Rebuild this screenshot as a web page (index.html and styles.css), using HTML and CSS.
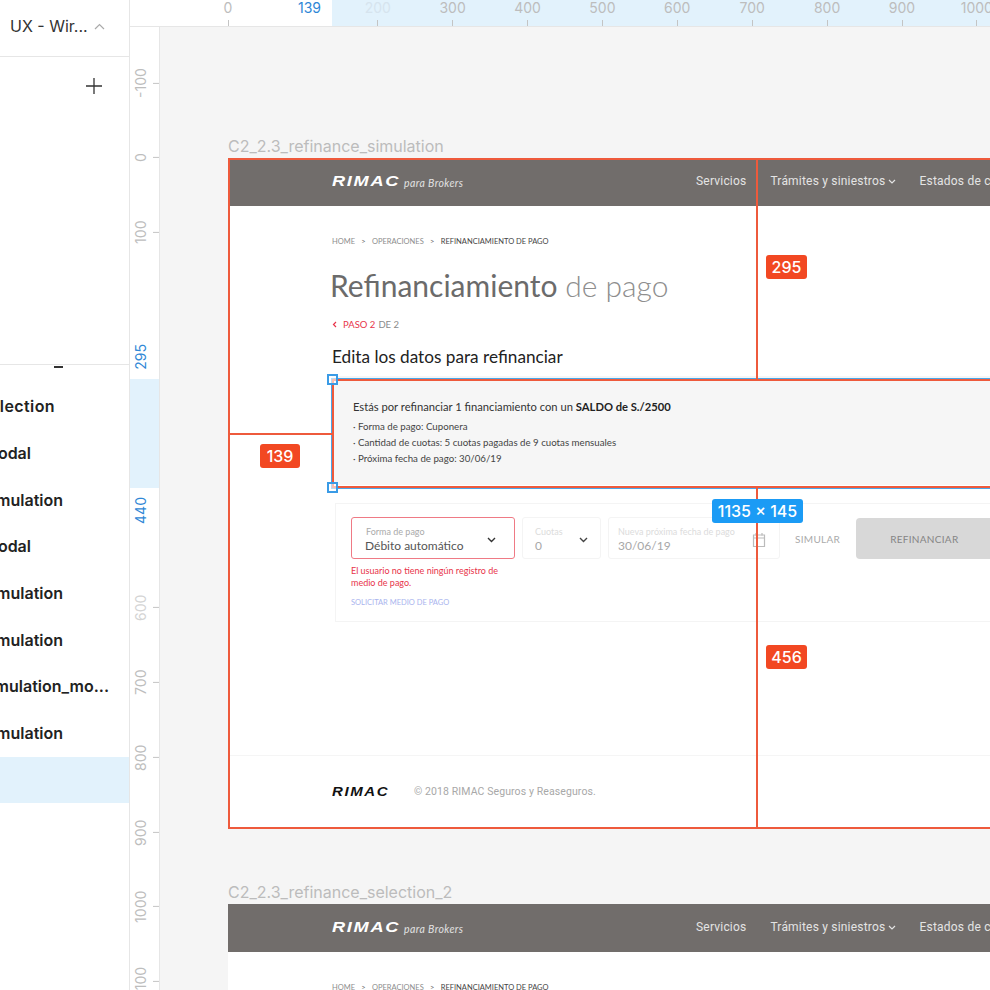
FILE: index.html
```html
<!DOCTYPE html>
<html lang="en">
<head>
    <meta charset="UTF-8">
    <title>UX - Wireframes</title>
    <link rel="stylesheet" href="styles.css">
</head>
<body>
    <div class="app">
        <aside class="sidebar">
            <div class="file-bar">
                <span class="file-name">UX - Wir...</span>
                <svg class="file-caret" width="11" height="7" viewBox="0 0 11 7"><path d="M1 6l4.5-4.5L10 6" fill="none" stroke="#aaa" stroke-width="1.2"/></svg>
            </div>
            <div class="pages-bar">
                <svg width="18" height="18" viewBox="0 0 18 18"><path d="M9 1v16M1 9h16" fill="none" stroke="#333" stroke-width="1.3"/></svg>
            </div>
            <div class="layers">
                <div class="layer-tail"></div>
                <div class="layer end-54">lection</div>
                <div class="layer end-30">odal</div>
                <div class="layer end-62">mulation</div>
                <div class="layer end-30">odal</div>
                <div class="layer end-62">mulation</div>
                <div class="layer end-62">mulation</div>
                <div class="layer end-108">mulation_mo...</div>
                <div class="layer end-62">mulation</div>
                <div class="layer layer-selected"></div>
            </div>
        </aside>

        <main class="workspace">
            <div class="ruler-top">
                <div class="ruler-top-band"></div>
                <span class="ruler-top-value">139</span>
                <div class="ruler-top-cells">
                    <span class="mark">0</span>
                    <span class="mark no-tick"></span>
                    <span class="mark faded">200</span>
                    <span class="mark">300</span>
                    <span class="mark">400</span>
                    <span class="mark">500</span>
                    <span class="mark">600</span>
                    <span class="mark">700</span>
                    <span class="mark">800</span>
                    <span class="mark">900</span>
                    <span class="mark">1000</span>
                </div>
            </div>
            <div class="workspace-body">
                <div class="ruler-left">
                    <div class="ruler-left-band"></div>
                    <span class="ruler-left-value value-295">295</span>
                    <span class="ruler-left-value value-440">440</span>
                    <div class="ruler-left-cells">
                        <span class="vmark">-100</span>
                        <span class="vmark">0</span>
                        <span class="vmark">100</span>
                        <span class="vmark no-tick"></span>
                        <span class="vmark no-tick"></span>
                        <span class="vmark no-tick"></span>
                        <span class="vmark no-tick"></span>
                        <span class="vmark faded">600</span>
                        <span class="vmark">700</span>
                        <span class="vmark">800</span>
                        <span class="vmark">900</span>
                        <span class="vmark">1000</span>
                        <span class="vmark">1100</span>
                    </div>
                </div>

                <div class="canvas">
                    <div class="frame-label label-one">C2_2.3_refinance_simulation</div>
                    <section class="frame frame-one">
                        <header class="site-header">
                            <div class="brand">
                                <span class="logo">RIMAC</span>
                                <span class="brand-sub">para Brokers</span>
                            </div>
                            <nav class="site-nav">
                                <span>Servicios</span>
                                <span class="nav-drop">Trámites y siniestros
                                    <svg width="8" height="5" viewBox="0 0 8 5"><path d="M1 1l3 3 3-3" fill="none" stroke="#e4e4e4" stroke-width="1.2"/></svg>
                                </span>
                                <span>Estados de cuenta</span>
                            </nav>
                        </header>

                        <div class="page">
                            <div class="crumbs">
                                <span>HOME</span><i>&gt;</i><span>OPERACIONES</span><i>&gt;</i><span class="crumb-now">REFINANCIAMIENTO DE PAGO</span>
                            </div>
                            <h1 class="page-title">Refinanciamiento <span>de pago</span></h1>
                            <div class="step">
                                <svg width="5" height="7" viewBox="0 0 5 7"><path d="M4 1L1.5 3.5 4 6" fill="none" stroke="#e8344a" stroke-width="1.2"/></svg>
                                <span class="step-now">PASO 2</span> <span>DE 2</span>
                            </div>
                            <h2 class="section-title">Edita los datos para refinanciar</h2>

                            <div class="notice">
                                <p class="notice-lead">Estás por refinanciar 1 financiamiento con un <b>SALDO de S./2500</b></p>
                                <p>· Forma de pago: Cuponera</p>
                                <p>· Cantidad de cuotas: 5 cuotas pagadas de 9 cuotas mensuales</p>
                                <p>· Próxima fecha de pago: 30/06/19</p>
                            </div>

                            <div class="form-card">
                                <div class="field-col">
                                    <div class="field field-error">
                                        <div>
                                            <div class="field-label">Forma de pago</div>
                                            <div class="field-value">Débito automático</div>
                                        </div>
                                        <svg width="9" height="6" viewBox="0 0 9 6"><path d="M1 1l3.5 3.5L8 1" fill="none" stroke="#333" stroke-width="1.4"/></svg>
                                    </div>
                                    <p class="field-msg">El usuario no tiene ningún registro de medio de pago.</p>
                                    <div class="field-link">SOLICITAR MEDIO DE PAGO</div>
                                </div>
                                <div class="field field-off field-cuotas">
                                    <div>
                                        <div class="field-label">Cuotas</div>
                                        <div class="field-value">0</div>
                                    </div>
                                    <svg width="9" height="6" viewBox="0 0 9 6"><path d="M1 1l3.5 3.5L8 1" fill="none" stroke="#444" stroke-width="1.4"/></svg>
                                </div>
                                <div class="field field-off field-date">
                                    <div>
                                        <div class="field-label">Nueva próxima fecha de pago</div>
                                        <div class="field-value">30/06/19</div>
                                    </div>
                                    <svg width="14" height="16" viewBox="0 0 14 16"><path d="M1.5 3h11v11.5h-11zM1.5 6h11" fill="none" stroke="#bbb" stroke-width="1.2"/><path d="M4 1v2.5M10 1v2.5" stroke="#bbb" stroke-width="1.2"/></svg>
                                </div>
                                <span class="btn-text">SIMULAR</span>
                                <span class="btn-solid">REFINANCIAR</span>
                            </div>
                        </div>

                        <footer class="site-footer">
                            <span class="logo logo-dark">RIMAC</span>
                            <span class="copyright">© 2018 RIMAC Seguros y Reaseguros.</span>
                        </footer>

                        <!-- measure overlay -->
                        <div class="frame-outline"></div>
                        <div class="select-box">
                            <span class="handle handle-top"></span>
                            <span class="handle handle-bottom"></span>
                        </div>
                        <div class="guide guide-left"></div>
                        <div class="guide guide-up"></div>
                        <div class="guide guide-down"></div>
                        <span class="tag tag-139">139</span>
                        <span class="tag tag-295">295</span>
                        <span class="tag tag-456">456</span>
                        <span class="tag tag-size">1135 × 145</span>
                    </section>

                    <div class="frame-label label-two">C2_2.3_refinance_selection_2</div>
                    <section class="frame frame-two">
                        <header class="site-header">
                            <div class="brand">
                                <span class="logo">RIMAC</span>
                                <span class="brand-sub">para Brokers</span>
                            </div>
                            <nav class="site-nav">
                                <span>Servicios</span>
                                <span class="nav-drop">Trámites y siniestros
                                    <svg width="8" height="5" viewBox="0 0 8 5"><path d="M1 1l3 3 3-3" fill="none" stroke="#e4e4e4" stroke-width="1.2"/></svg>
                                </span>
                                <span>Estados de cuenta</span>
                            </nav>
                        </header>
                        <div class="page">
                            <div class="crumbs">
                                <span>HOME</span><i>&gt;</i><span>OPERACIONES</span><i>&gt;</i><span class="crumb-now">REFINANCIAMIENTO DE PAGO</span>
                            </div>
                        </div>
                    </section>
                </div>
            </div>
        </main>
    </div>
</body>
</html>
```

FILE: styles.css
```css
* {
    box-sizing: border-box;
}
html, body {
    margin: 0;
    height: 100%;
    overflow: hidden;
}
body {
    font-family: Inter, "Noto Sans", sans-serif;
    color: #333;
    background-color: #fff;
}
p {
    margin: 0;
}
.app {
    display: flex;
    width: 990px;
    height: 990px;
    overflow: hidden;
}

/* left panel */
.sidebar {
    width: 130px;
    flex-shrink: 0;
    background-color: #fff;
    border-right: 1px solid #e6e6e6;
    overflow: hidden;
}
.file-bar {
    height: 57px;
    padding: 0 0 4px 10px;
    display: flex;
    align-items: center;
    border-bottom: 1px solid #e6e6e6;
}
.file-name {
    font-size: 16px;
    color: #333;
    white-space: nowrap;
}
.file-caret {
    margin-left: 6px;
}
.pages-bar {
    height: 308px;
    padding: 20px 0 0 85px;
    border-bottom: 1px solid #e6e6e6;
}
.layers {
    position: relative;
    padding-top: 18px;
}
.layer-tail {
    position: absolute;
    left: 54px;
    top: 1px;
    width: 9px;
    height: 2px;
    background-color: #333;
}
.layer {
    height: 46.7px;
    display: flex;
    align-items: center;
    justify-content: flex-end;
    font-size: 16px;
    font-weight: 600;
    color: #222;
    white-space: nowrap;
}
.end-30 { width: 31px; }
.end-54 { width: 55px; letter-spacing: 0.4px; }
.end-62 { width: 63px; }
.end-108 { width: 109px; }
.layer-selected {
    width: auto;
    background-color: #e2f2fc;
}

/* rulers */
.workspace {
    flex: 1;
    min-width: 0;
    display: flex;
    flex-direction: column;
}
.ruler-top {
    position: relative;
    height: 27px;
    background-color: #fff;
    border-bottom: 1px solid #e6e6e6;
    overflow: hidden;
    flex-shrink: 0;
}
.ruler-top-band {
    position: absolute;
    left: 202px;
    right: 0;
    top: 0;
    bottom: 0;
    background-color: #e2f2fc;
}
.ruler-top-value {
    position: absolute;
    left: 168px;
    top: 0;
    font-size: 14px;
    line-height: 16px;
    color: #2f87d6;
}
.ruler-top-cells {
    position: relative;
    display: flex;
    padding-left: 60.5px;
}
.mark {
    position: relative;
    width: 74.9px;
    height: 27px;
    flex-shrink: 0;
    text-align: center;
    font-size: 14px;
    line-height: 16px;
    color: #bdbdbd;
}
.mark::after {
    content: "";
    position: absolute;
    left: 37px;
    top: 20px;
    width: 1px;
    height: 6px;
    background-color: #c4c4c4;
}
.mark.no-tick::after,
.vmark.no-tick::after {
    display: none;
}
.mark.faded {
    color: #d6e4ee;
}
.workspace-body {
    flex: 1;
    min-height: 0;
    display: flex;
}
.ruler-left {
    position: relative;
    width: 30px;
    flex-shrink: 0;
    background-color: #fff;
    border-right: 1px solid #e6e6e6;
    overflow: hidden;
}
.ruler-left-band {
    position: absolute;
    left: 0;
    right: 0;
    top: 352px;
    height: 109px;
    background-color: #e2f2fc;
}
.ruler-left-value {
    position: absolute;
    left: 3px;
    writing-mode: vertical-rl;
    transform: rotate(180deg);
    font-size: 14px;
    line-height: 16px;
    color: #2f87d6;
}
.value-295 { top: 317px; }
.value-440 { top: 470px; }
.ruler-left-cells {
    position: relative;
    padding-top: 18.6px;
}
.vmark {
    position: relative;
    display: flex;
    align-items: center;
    justify-content: center;
    width: 29px;
    height: 74.9px;
    padding-left: 8px;
    font-size: 14px;
    color: #bdbdbd;
    writing-mode: vertical-rl;
    transform: rotate(180deg);
}
.vmark::after {
    content: "";
    position: absolute;
    left: 0;
    top: 37px;
    width: 6px;
    height: 1px;
    background-color: #c4c4c4;
}
.vmark.faded {
    color: #d4d4d4;
}

/* canvas and frames */
.canvas {
    position: relative;
    flex: 1;
    min-width: 0;
    overflow: hidden;
    background-color: #f5f5f5;
}
.frame-label {
    position: absolute;
    left: 68px;
    font-size: 16px;
    line-height: 20px;
    color: #bcbcbc;
    white-space: nowrap;
}
.label-one { top: 109px; }
.label-two { top: 855px; }
.frame {
    position: absolute;
    left: 68px;
    width: 1440px;
    display: flex;
    flex-direction: column;
    background-color: #fff;
    font-family: Lato, "Noto Sans", sans-serif;
}
.frame-one {
    top: 131px;
    height: 671px;
}
.frame-two {
    top: 877px;
    height: 400px;
}
.site-header {
    height: 48px;
    flex-shrink: 0;
    display: flex;
    align-items: center;
    padding: 0 0 2px 104px;
    background-color: #716d6b;
}
.brand {
    width: 364px;
    display: flex;
    align-items: center;
    gap: 6px;
}
.logo {
    font-family: "Liberation Sans", Arial, sans-serif;
    font-size: 14px;
    font-weight: 700;
    font-style: italic;
    letter-spacing: 1.3px;
    color: #fff;
    transform: scaleX(1.3);
    transform-origin: left center;
    display: inline-block;
    width: 66px;
}
.brand-sub {
    margin-top: 4px;
    font-size: 10.5px;
    font-style: italic;
    letter-spacing: 0.4px;
    color: #e2e2e2;
}
.site-nav {
    display: flex;
    gap: 24px;
    font-family: Roboto, sans-serif;
    font-size: 12px;
    letter-spacing: 0.2px;
    color: #e4e4e4;
    white-space: nowrap;
}
.nav-drop svg {
    margin-left: -1px;
    vertical-align: 1px;
}
.page {
    flex: 1;
    padding: 29px 0 0 104px;
}
.crumbs {
    height: 12px;
    display: flex;
    align-items: center;
    font-size: 7.5px;
    color: #8d8d8d;
    white-space: nowrap;
}
.crumbs i {
    width: 17px;
    text-align: center;
    font-style: normal;
    color: #666;
}
.crumb-now {
    color: #444;
}
.page-title {
    margin: 18px 0 0 -2px;
    font-size: 30px;
    line-height: 40px;
    font-weight: 400;
    color: #6b6b6b;
    white-space: nowrap;
}
.page-title span {
    font-weight: 300;
    color: #8e8e8e;
}
.step {
    margin-top: 12px;
    height: 14px;
    display: flex;
    align-items: center;
    gap: 3px;
    font-size: 9.5px;
    color: #8a8a8a;
}
.step svg {
    margin-right: 3px;
}
.step-now {
    color: #e8344a;
}
.section-title {
    margin: 15px 0 0;
    height: 22px;
    font-size: 17.2px;
    line-height: 22px;
    font-weight: 400;
    color: #222;
}
.notice {
    margin-top: 8px;
    height: 109px;
    padding: 23px 0 0 21px;
    background-color: #f6f6f6;
    font-size: 9.7px;
    line-height: 16px;
    color: #444;
}
.notice-lead {
    font-size: 11.2px;
    margin-bottom: 3px;
    color: #333;
}
.notice-lead b {
    color: #222;
}
.form-card {
    margin: 18px 0 0 3px;
    height: 119px;
    padding: 13px 0 0 15px;
    display: flex;
    align-items: flex-start;
    border: 1px solid #f4f4f4;
}
.field-col {
    width: 164px;
}
.field {
    height: 42px;
    padding-top: 4px;
    display: flex;
    align-items: center;
    justify-content: space-between;
    border: 1px solid #f4f4f4;
    border-radius: 3px;
}
.field-error {
    border-color: #ef7a85;
    padding: 4px 18px 0 13px;
}
.field-label {
    font-size: 9px;
    line-height: 12px;
    color: #aaa;
}
.field-error .field-label {
    padding-left: 1px;
}
.field-value {
    font-size: 12px;
    line-height: 16px;
    color: #555;
}
.field-off .field-label {
    color: #dcdcdc;
}
.field-off .field-value {
    color: #a8a8a8;
}
.field-cuotas {
    width: 79px;
    margin-left: 7px;
    padding: 4px 12px 0;
}
.field-date {
    width: 172px;
    margin-left: 7px;
    padding: 4px 13px 0 9px;
}
.field-msg {
    margin-top: 6px;
    font-size: 9px;
    line-height: 12px;
    color: #e8344a;
}
.field-link {
    margin-top: 8px;
    font-size: 7.5px;
    line-height: 11px;
    color: #a9b4ee;
}
.btn-text {
    margin: 14px 0 0 15px;
    font-size: 10px;
    line-height: 16px;
    letter-spacing: 0.3px;
    color: #aaa;
}
.btn-solid {
    margin: 1px 0 0 16px;
    width: 200px;
    height: 41px;
    padding-left: 34px;
    display: flex;
    align-items: center;
    border-radius: 4px;
    background-color: #d8d8d8;
    font-size: 10px;
    letter-spacing: 0.3px;
    color: #858585;
}
.site-footer {
    height: 74px;
    flex-shrink: 0;
    padding: 0 0 2px 104px;
    display: flex;
    align-items: center;
    border-top: 1px solid #f5f5f5;
}
.logo-dark {
    font-size: 12px;
    width: 57px;
    color: #111;
    transform: scaleX(1.25);
}
.copyright {
    margin-left: 25px;
    font-family: Roboto, sans-serif;
    font-size: 10.5px;
    letter-spacing: 0.1px;
    color: #a8a8a8;
}

/* measure overlay */
.frame-outline {
    position: absolute;
    inset: 0;
    border: 2px solid #ee5a3c;
}
.select-box {
    position: absolute;
    left: 104px;
    top: 221px;
    width: 1135px;
    height: 109px;
    border: 2px solid #ee5a3c;
    outline: 1px solid #4aa6e8;
}
.handle {
    position: absolute;
    left: -7px;
    width: 11px;
    height: 11px;
    border: 2px solid #3a9be6;
    background-color: rgba(255, 255, 255, 0.6);
}
.handle-top { top: -7px; }
.handle-bottom { bottom: -7px; }
.guide {
    position: absolute;
    background-color: #ee5a3c;
}
.guide-left {
    left: 2px;
    top: 275px;
    width: 102px;
    height: 2px;
}
.guide-up {
    left: 528px;
    top: 0;
    width: 2px;
    height: 221px;
}
.guide-down {
    left: 528px;
    top: 330px;
    width: 2px;
    bottom: 0;
}
.tag {
    position: absolute;
    height: 24px;
    display: flex;
    align-items: center;
    justify-content: center;
    border-radius: 3px;
    font-family: Inter, sans-serif;
    font-size: 16px;
    font-weight: 500;
    color: #fff;
    background-color: #f24822;
    white-space: nowrap;
}
.tag-139 { left: 32px; top: 286px; width: 40px; }
.tag-295 { left: 538px; top: 97px; width: 41px; }
.tag-456 { left: 538px; top: 487px; width: 41px; }
.tag-size {
    left: 484px;
    top: 341px;
    width: 91px;
    background-color: #1b9bf5;
}
```
